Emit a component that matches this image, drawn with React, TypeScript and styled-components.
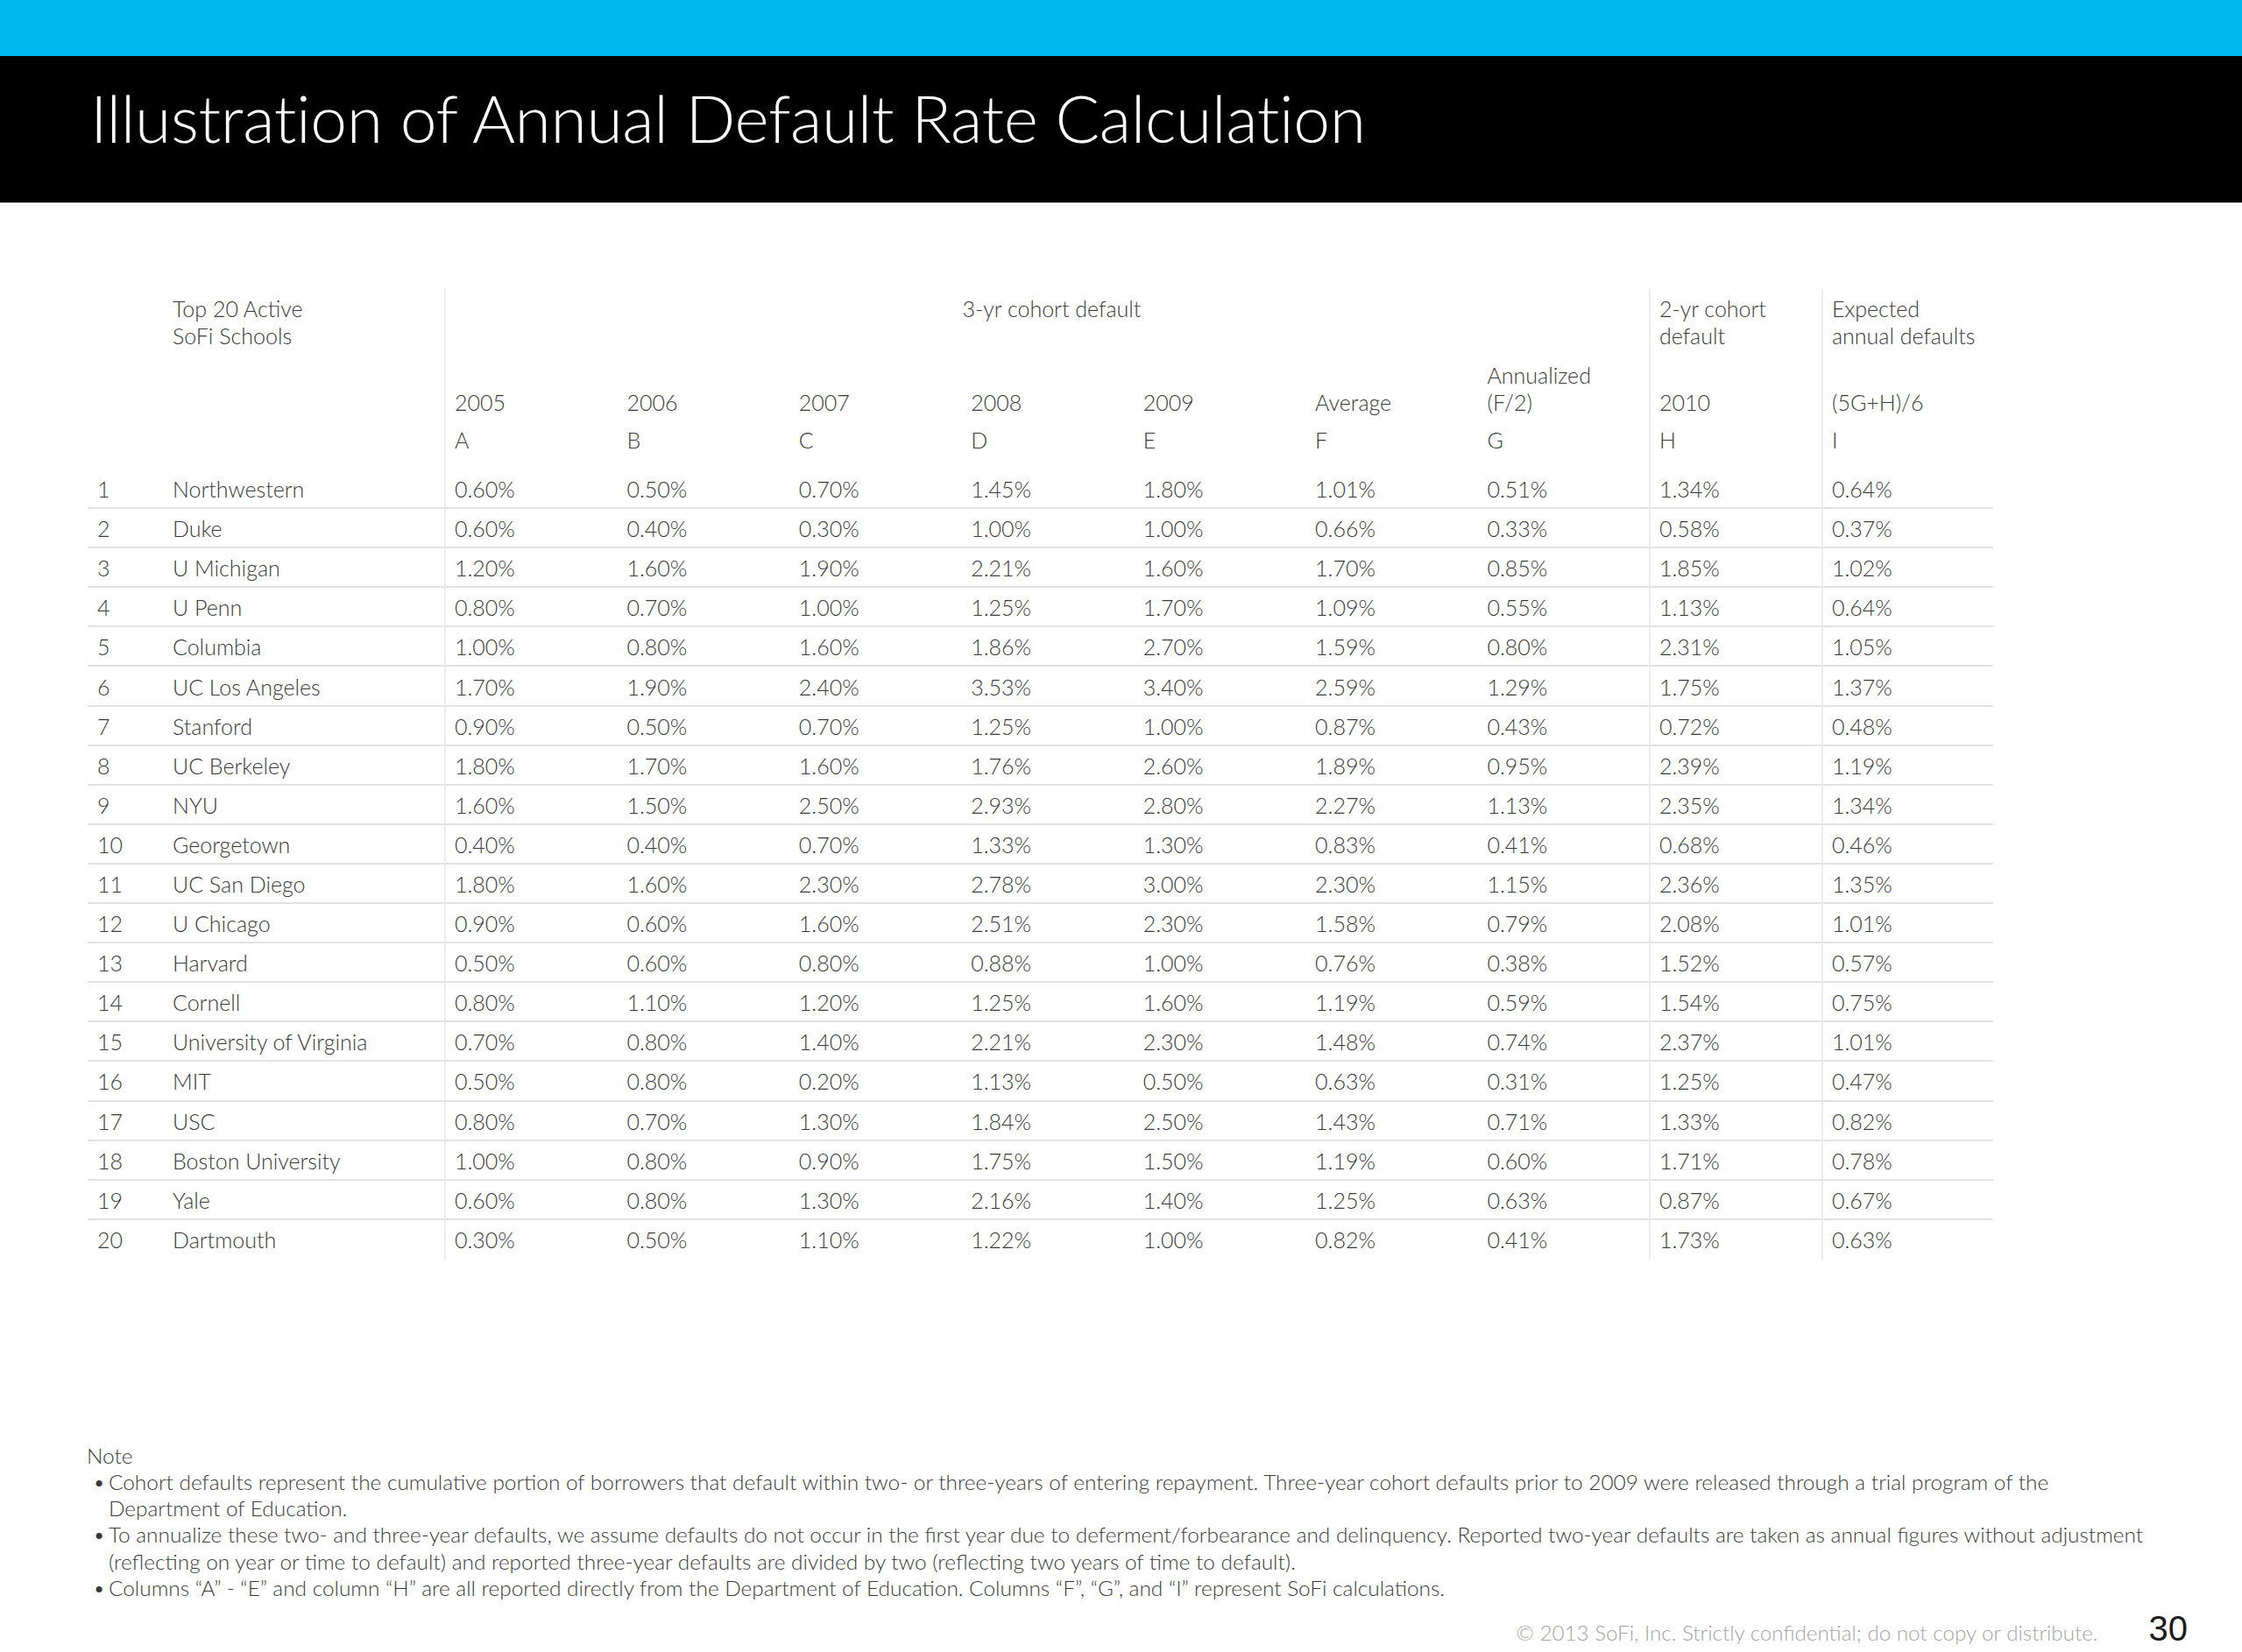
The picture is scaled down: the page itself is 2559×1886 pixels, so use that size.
import React from "react";
import styled, { createGlobalStyle } from "styled-components";

const Global = createGlobalStyle`
  *, *::before, *::after { box-sizing: border-box; }
  html, body { margin: 0; padding: 0; background: #ffffff; }
  body { font-family: Lato, "Open Sans", "Liberation Sans", sans-serif; color: #3d3d3d; }
`;

const Page = styled.div`
  width: 2559px;
  height: 1886px;
  display: flex;
  flex-direction: column;
  background: #ffffff;
  overflow: hidden;
`;

const TopStripe = styled.div`
  height: 64px;
  background: #00b8f0;
`;

const TitleBar = styled.header`
  height: 168px;
  background: #000000;
  border-bottom: 1px solid #b5b5b5;
  padding: 23px 0 0 103px;
`;

const Title = styled.h1`
  margin: 0;
  font-family: Lato, "Open Sans", sans-serif;
  font-weight: 300;
  font-size: 75px;
  line-height: 94px;
  color: #ffffff;
  letter-spacing: -0.35px;
  white-space: nowrap;
`;

const Table = styled.div`
  margin: 98px 0 0 100px;
  width: 2175px;
  display: grid;
  grid-template-columns: 97px 310px repeat(7, 196.43px) 197px 196px;
  grid-template-rows: 82px 63px 61px repeat(20, 45.1px);
  font-size: 25px;
  font-weight: 300;
  color: #3a3a3a;
`;

const HeadCell = styled.div<{ $col: string; $row: string; $divider?: boolean; $align?: "top" | "bottom" | "letter"; $center?: boolean; $pad?: boolean }>`
  grid-column: ${(p) => p.$col};
  grid-row: ${(p) => p.$row};
  border-left: ${(p) => (p.$divider ? "2px solid #ececec" : "none")};
  padding-left: ${(p) => (p.$divider ? "10px" : p.$pad ? "12px" : "0")};
  display: flex;
  flex-direction: column;
  justify-content: ${(p) => (p.$align === "bottom" ? "flex-end" : "flex-start")};
  align-items: ${(p) => (p.$center ? "center" : "flex-start")};
  padding-top: ${(p) => (p.$align === "letter" ? "12px" : p.$align === "bottom" ? "0" : "7px")};
  line-height: 31px;
  white-space: nowrap;
`;

const Cell = styled.div<{ $divider?: boolean; $lined?: boolean; $indent: number }>`
  display: flex;
  align-items: center;
  border-left: ${(p) => (p.$divider ? "2px solid #ececec" : "none")};
  border-bottom: ${(p) => (p.$lined ? "2px solid #e2e2e2" : "none")};
  padding-left: ${(p) => (p.$divider ? p.$indent - 2 : p.$indent)}px;
  padding-top: ${(p) => (p.$lined ? 2 : 0)}px;
  white-space: nowrap;
  line-height: 31px;
`;

const Notes = styled.section`
  margin: 209px 0 0 99px;
  font-size: 24.4px;
  font-weight: 300;
  line-height: 30.2px;
  color: #3a3a3a;
`;

const NoteHead = styled.div``;

const BulletList = styled.ul`
  margin: 0;
  padding: 0;
  list-style: none;
`;

const Bullet = styled.li`
  display: flex;
  white-space: nowrap;
  &::before {
    content: "•";
    width: 25px;
    flex: none;
    padding-left: 7px;
  }
`;

const Footer = styled.footer`
  margin-top: 15px;
  height: 40px;
  display: flex;
  align-items: center;
  justify-content: flex-end;
  padding-right: 62px;
`;

const Copyright = styled.span`
  font-size: 24.2px;
  font-weight: 300;
  color: #a3a3a3;
  margin-right: 58px;
`;

const PageNumber = styled.span`
  font-family: "Liberation Sans", Arial, sans-serif;
  font-size: 40px;
  color: #1c1c1c;
  margin-top: -8px;
`;

const rows: [string, string[]][] = [
  ["Northwestern", ["0.60%", "0.50%", "0.70%", "1.45%", "1.80%", "1.01%", "0.51%", "1.34%", "0.64%"]],
  ["Duke", ["0.60%", "0.40%", "0.30%", "1.00%", "1.00%", "0.66%", "0.33%", "0.58%", "0.37%"]],
  ["U Michigan", ["1.20%", "1.60%", "1.90%", "2.21%", "1.60%", "1.70%", "0.85%", "1.85%", "1.02%"]],
  ["U Penn", ["0.80%", "0.70%", "1.00%", "1.25%", "1.70%", "1.09%", "0.55%", "1.13%", "0.64%"]],
  ["Columbia", ["1.00%", "0.80%", "1.60%", "1.86%", "2.70%", "1.59%", "0.80%", "2.31%", "1.05%"]],
  ["UC Los Angeles", ["1.70%", "1.90%", "2.40%", "3.53%", "3.40%", "2.59%", "1.29%", "1.75%", "1.37%"]],
  ["Stanford", ["0.90%", "0.50%", "0.70%", "1.25%", "1.00%", "0.87%", "0.43%", "0.72%", "0.48%"]],
  ["UC Berkeley", ["1.80%", "1.70%", "1.60%", "1.76%", "2.60%", "1.89%", "0.95%", "2.39%", "1.19%"]],
  ["NYU", ["1.60%", "1.50%", "2.50%", "2.93%", "2.80%", "2.27%", "1.13%", "2.35%", "1.34%"]],
  ["Georgetown", ["0.40%", "0.40%", "0.70%", "1.33%", "1.30%", "0.83%", "0.41%", "0.68%", "0.46%"]],
  ["UC San Diego", ["1.80%", "1.60%", "2.30%", "2.78%", "3.00%", "2.30%", "1.15%", "2.36%", "1.35%"]],
  ["U Chicago", ["0.90%", "0.60%", "1.60%", "2.51%", "2.30%", "1.58%", "0.79%", "2.08%", "1.01%"]],
  ["Harvard", ["0.50%", "0.60%", "0.80%", "0.88%", "1.00%", "0.76%", "0.38%", "1.52%", "0.57%"]],
  ["Cornell", ["0.80%", "1.10%", "1.20%", "1.25%", "1.60%", "1.19%", "0.59%", "1.54%", "0.75%"]],
  ["University of Virginia", ["0.70%", "0.80%", "1.40%", "2.21%", "2.30%", "1.48%", "0.74%", "2.37%", "1.01%"]],
  ["MIT", ["0.50%", "0.80%", "0.20%", "1.13%", "0.50%", "0.63%", "0.31%", "1.25%", "0.47%"]],
  ["USC", ["0.80%", "0.70%", "1.30%", "1.84%", "2.50%", "1.43%", "0.71%", "1.33%", "0.82%"]],
  ["Boston University", ["1.00%", "0.80%", "0.90%", "1.75%", "1.50%", "1.19%", "0.60%", "1.71%", "0.78%"]],
  ["Yale", ["0.60%", "0.80%", "1.30%", "2.16%", "1.40%", "1.25%", "0.63%", "0.87%", "0.67%"]],
  ["Dartmouth", ["0.30%", "0.50%", "1.10%", "1.22%", "1.00%", "0.82%", "0.41%", "1.73%", "0.63%"]],
];

const years: React.ReactNode[] = [
  "2005",
  "2006",
  "2007",
  "2008",
  "2009",
  "Average",
  <>
    <span>Annualized</span>
    <span>(F/2)</span>
  </>,
  "2010",
  "(5G+H)/6",
];
const letters = ["A", "B", "C", "D", "E", "F", "G", "H", "I"];
const dividerCols = new Set([0, 7, 8]);

export default function App() {
  return (
    <Page>
      <Global />
      <TopStripe />
      <TitleBar>
        <Title>Illustration of Annual Default Rate Calculation</Title>
      </TitleBar>

      <Table>
        <HeadCell $col="1" $row="1 / 4" />
        <HeadCell $col="2" $row="1 / 4">
          <span>Top 20 Active</span>
          <span>SoFi Schools</span>
        </HeadCell>
        <HeadCell $col="3 / 10" $row="1" $divider $center>
          3-yr cohort default
        </HeadCell>
        <HeadCell $col="10" $row="1" $divider>
          <span>2-yr cohort</span>
          <span>default</span>
        </HeadCell>
        <HeadCell $col="11" $row="1" $divider>
          <span>Expected</span>
          <span>annual defaults</span>
        </HeadCell>
        {years.map((y, i) => (
          <HeadCell key={"y" + i} $col={String(i + 3)} $row="2" $divider={dividerCols.has(i)} $pad $align="bottom">
            {y}
          </HeadCell>
        ))}
        {letters.map((l, i) => (
          <HeadCell key={"l" + i} $col={String(i + 3)} $row="3" $divider={dividerCols.has(i)} $pad $align="letter">
            {l}
          </HeadCell>
        ))}
        {rows.map(([name, vals], r) => {
          const lined = r < rows.length - 1;
          return (
            <React.Fragment key={name}>
              <Cell $lined={lined} $indent={11}>
                {r + 1}
              </Cell>
              <Cell $lined={lined} $indent={0}>
                {name}
              </Cell>
              {vals.map((v, i) => (
                <Cell key={i} $lined={lined} $divider={dividerCols.has(i)} $indent={12}>
                  {v}
                </Cell>
              ))}
            </React.Fragment>
          );
        })}
      </Table>

      <Notes>
        <NoteHead>Note</NoteHead>
        <BulletList>
          <Bullet>
            <span>
              Cohort defaults represent the cumulative portion of borrowers that default within two- or three-years of entering repayment. Three-year cohort defaults prior to 2009 were released through a trial program of the
              <br />
              Department of Education.
            </span>
          </Bullet>
          <Bullet>
            <span>
              To annualize these two- and three-year defaults, we assume defaults do not occur in the first year due to deferment/forbearance and delinquency. Reported two-year defaults are taken as annual figures without adjustment
              <br />
              (reflecting on year or time to default) and reported three-year defaults are divided by two (reflecting two years of time to default).
            </span>
          </Bullet>
          <Bullet>
            <span>
              Columns “A” - “E” and column “H” are all reported directly from the Department of Education. Columns “F”, “G”, and “I” represent SoFi calculations.
            </span>
          </Bullet>
        </BulletList>
      </Notes>

      <Footer>
        <Copyright>© 2013 SoFi, Inc. Strictly confidential; do not copy or distribute.</Copyright>
        <PageNumber>30</PageNumber>
      </Footer>
    </Page>
  );
}
